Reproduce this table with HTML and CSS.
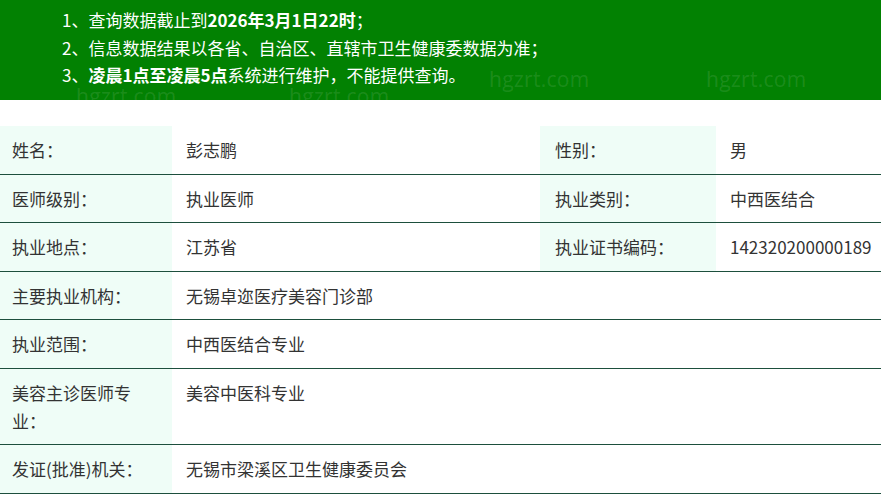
FILE: index.html
```html
<!DOCTYPE html>
<html lang="zh-CN">
<head>
<meta charset="utf-8">
<title>医师查询结果</title>
<link rel="stylesheet" href="styles.css">
</head>
<body>
<div class="notice">
  <p>1、查询数据截止到<b>2026年3月1日22时</b>；</p>
  <p>2、信息数据结果以各省、自治区、直辖市卫生健康委数据为准；</p>
  <p>3、<b>凌晨1点至凌晨5点</b>系统进行维护，不能提供查询。</p>
  <span class="wm wm1">hgzrt.com</span>
  <span class="wm wm2">hgzrt.com</span>
  <span class="wm wm3">hgzrt.com</span>
  <span class="wm wm4">hgzrt.com</span>
</div>
<table class="info">
  <colgroup>
    <col class="c1"><col class="c2"><col class="c3"><col class="c4">
  </colgroup>
  <tr>
    <td class="lbl">姓名：</td><td>彭志鹏</td>
    <td class="lbl lbl2">性别：</td><td>男</td>
  </tr>
  <tr>
    <td class="lbl">医师级别：</td><td>执业医师</td>
    <td class="lbl lbl2">执业类别：</td><td>中西医结合</td>
  </tr>
  <tr>
    <td class="lbl">执业地点：</td><td>江苏省</td>
    <td class="lbl lbl2">执业证书编码：</td><td>142320200000189</td>
  </tr>
  <tr>
    <td class="lbl">主要执业机构：</td><td colspan="3">无锡卓迩医疗美容门诊部</td>
  </tr>
  <tr>
    <td class="lbl">执业范围：</td><td colspan="3">中西医结合专业</td>
  </tr>
  <tr>
    <td class="lbl">美容主诊医师专业：</td><td colspan="3">美容中医科专业</td>
  </tr>
  <tr>
    <td class="lbl">发证(批准)机关：</td><td colspan="3">无锡市梁溪区卫生健康委员会</td>
  </tr>
</table>
</body>
</html>
```
FILE: styles.css
```css
html, body {
  margin: 0;
  padding: 0;
  background: #ffffff;
  font-family: "Noto Sans CJK SC", "Noto Sans", sans-serif;
  color: #333333;
}

.notice {
  position: relative;
  background: #028102;
  color: #ffffff;
  height: 100px;
  box-sizing: border-box;
  padding: 6px 0 0 62px;
  font-size: 17px;
}

.notice p {
  margin: 0;
  line-height: 27.5px;
  position: relative;
  z-index: 1;
}

.notice b {
  font-weight: 700;
}

.wm {
  position: absolute;
  font-family: "Open Sans", sans-serif;
  font-size: 21px;
  line-height: 24px;
  color: rgba(255, 255, 255, 0.11);
  letter-spacing: 0.3px;
}
.wm1 { left: 76px; top: 84px; }
.wm2 { left: 289px; top: 84px; }
.wm3 { left: 489px; top: 67px; }
.wm4 { left: 706px; top: 67px; }

.info {
  position: relative;
  z-index: 2;
  background: #ffffff;
  margin-top: 26px;
  width: 881px;
  border-collapse: collapse;
  table-layout: fixed;
  font-size: 17px;
}

.c1 { width: 172px; }
.c2 { width: 368px; }
.c3 { width: 176px; }
.c4 { width: 165px; }

.info td {
  padding: 10px 14px 9.5px 14px;
  line-height: 28px;
  border-bottom: 1px solid #1d4f3d;
  vertical-align: top;
  white-space: nowrap;
}

.info td.lbl {
  background: #effdf7;
  padding-left: 12px;
  padding-right: 20px;
  white-space: normal;
}

.info td.lbl2 {
  padding-left: 15px;
}
```
